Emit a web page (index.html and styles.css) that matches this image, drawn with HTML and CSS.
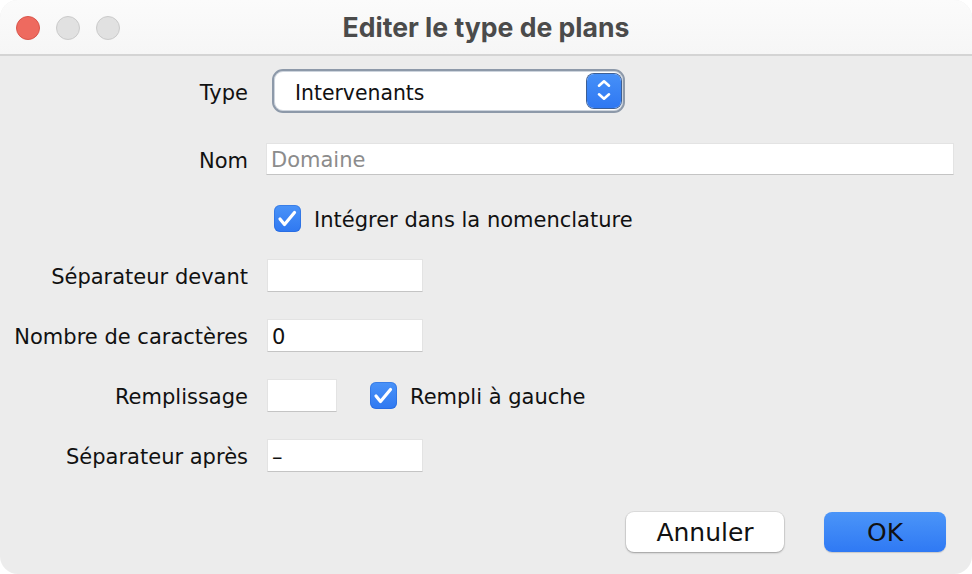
FILE: index.html
```html
<!DOCTYPE html>
<html lang="fr">
<head>
<meta charset="utf-8">
<title>Editer le type de plans</title>
<link rel="stylesheet" href="styles.css">
</head>
<body>
<div class="window">
  <header class="titlebar">
    <div class="lights">
      <span class="light light-close"></span>
      <span class="light"></span>
      <span class="light"></span>
    </div>
    <h1 class="title">Editer le type de plans</h1>
    <div></div>
  </header>
  <main class="content">
    <div class="form">
      <div class="row row-type">
        <span class="label">Type</span>
        <div class="select">
          <span class="select-text">Intervenants</span>
          <span class="stepper">
            <svg width="34" height="34" viewBox="0 0 34 34"><path d="M12 11.7 L17 7.3 L22 11.7 M12 20.3 L17 24.7 L22 20.3" fill="none" stroke="#fff" stroke-width="2.6" stroke-linecap="round" stroke-linejoin="round"/></svg>
          </span>
        </div>
      </div>
      <div class="row row-nom">
        <span class="label">Nom</span>
        <div class="field field-wide"><span class="placeholder">Domaine</span></div>
      </div>
      <div class="row row-check">
        <span class="label"></span>
        <span class="check check-first"><svg width="27" height="27" viewBox="0 0 27 27"><path d="M6 14 L10.5 19.5 L20.5 7.5" fill="none" stroke="#fff" stroke-width="3.2" stroke-linecap="round" stroke-linejoin="round"/></svg></span>
        <span class="check-label">Intégrer dans la nomenclature</span>
      </div>
      <div class="row">
        <span class="label">Séparateur devant</span>
        <div class="field field-medium"></div>
      </div>
      <div class="row">
        <span class="label">Nombre de caractères</span>
        <div class="field field-medium"><span class="value">0</span></div>
      </div>
      <div class="row">
        <span class="label">Remplissage</span>
        <div class="field field-small"></div>
        <span class="check check-inline"><svg width="27" height="27" viewBox="0 0 27 27"><path d="M6 14 L10.5 19.5 L20.5 7.5" fill="none" stroke="#fff" stroke-width="3.2" stroke-linecap="round" stroke-linejoin="round"/></svg></span>
        <span class="check-label">Rempli à gauche</span>
      </div>
      <div class="row">
        <span class="label">Séparateur après</span>
        <div class="field field-medium"><span class="value">–</span></div>
      </div>
    </div>
    <footer class="actions">
      <button class="btn">Annuler</button>
      <button class="btn btn-primary">OK</button>
    </footer>
  </main>
</div>
</body>
</html>
```

FILE: styles.css
```css
html, body {
  margin: 0;
  padding: 0;
  background: #ffffff;
}

.window {
  width: 972px;
  height: 574px;
  border-radius: 18px;
  overflow: hidden;
  background: #ececec;
  display: flex;
  flex-direction: column;
  font-family: "DejaVu Sans", sans-serif;
  color: #111;
}

.titlebar {
  height: 54px;
  flex: none;
  background: linear-gradient(#fbfbfb, #f6f6f6);
  border-bottom: 2px solid #d4d4d4;
  display: grid;
  grid-template-columns: 1fr auto 1fr;
  align-items: center;
}

.lights {
  display: flex;
  gap: 16px;
  padding-left: 16px;
  padding-top: 2px;
}

.light {
  width: 24px;
  height: 24px;
  box-sizing: border-box;
  border-radius: 50%;
  background: #e1e1e1;
  border: 1px solid #cacaca;
}

.light-close {
  background: #ee6a5f;
  border-color: #d9554b;
}

.title {
  margin: 0;
  font-family: Inter, "Noto Sans", sans-serif;
  font-weight: 700;
  font-size: 26.6px;
  color: #4b4b4b;
  letter-spacing: 0;
}

.content {
  flex: 1;
  display: flex;
  flex-direction: column;
}

.form {
  display: flex;
  flex-direction: column;
  gap: 27px;
  padding-top: 13px;
  padding-left: 12px;
}

.row {
  display: flex;
  align-items: center;
  font-size: 21px;
}

.row-nom,
.row-check {
  margin-top: 3px;
}

.label {
  width: 236px;
  flex: none;
  text-align: right;
  white-space: nowrap;
  padding-top: 3px;
}

.select {
  margin-left: 24px;
  width: 353px;
  height: 44px;
  box-sizing: border-box;
  border: 2px solid #8d99a9;
  box-shadow: inset 0 0 0 1px #cdd4dd;
  border-radius: 11px;
  background: #ffffff;
  display: flex;
  align-items: center;
  justify-content: space-between;
  padding-left: 21px;
  padding-right: 2px;
}

.select-text {
  font-size: 20.4px;
  padding-top: 4px;
}

.stepper {
  width: 34px;
  height: 34px;
  box-sizing: border-box;
  border-radius: 7px;
  background: linear-gradient(#4690f8, #2f78f2);
  box-shadow: 0 0 0 1px #3d5f94;
  display: flex;
}

.stepper svg {
  display: block;
}

.field {
  height: 33px;
  box-sizing: border-box;
  background: #ffffff;
  border: 1px solid #e3e3e3;
  border-bottom-color: #c4c4c4;
  margin-left: 19px;
  display: flex;
  align-items: center;
  padding-left: 4px;
}

.field-wide {
  width: 688px;
  height: 32px;
  margin-left: 18px;
}

.field-medium {
  width: 156px;
}

.field-small {
  width: 70px;
}

.placeholder {
  color: #8c8c8c;
  padding-top: 2px;
}

.value {
  padding-top: 2px;
}

.check {
  width: 27px;
  height: 27px;
  border-radius: 6px;
  background: linear-gradient(#4a93f8, #2f78f1);
  box-shadow: inset 0 0 0 1px rgba(30, 90, 200, 0.35);
  flex: none;
  display: flex;
}

.check svg {
  display: block;
}

.check-first {
  margin-left: 26px;
}

.check-inline {
  margin-left: 33px;
}

.check-label {
  margin-left: 13px;
  white-space: nowrap;
  padding-top: 3px;
}

.actions {
  margin-top: 40px;
  display: flex;
  justify-content: flex-end;
  gap: 40px;
  padding-right: 26px;
}

.btn {
  height: 40px;
  border: none;
  border-radius: 8px;
  font-family: "DejaVu Sans", sans-serif;
  font-size: 25px;
  color: #111;
  background: #ffffff;
  box-shadow: 0 0 0 1px rgba(0, 0, 0, 0.06), 0 1px 2px rgba(0, 0, 0, 0.3);
  padding: 0;
  width: 158px;
}

.btn-primary {
  width: 122px;
  background: linear-gradient(#4b95f8, #2f79f4);
  box-shadow: 0 1px 1px rgba(0, 0, 0, 0.15);
}
```
